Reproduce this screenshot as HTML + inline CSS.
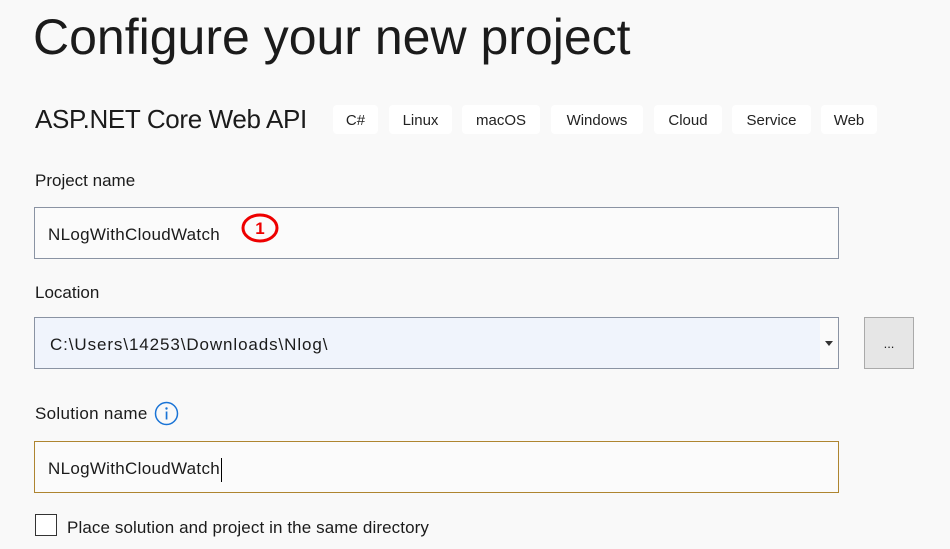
<!DOCTYPE html>
<html><head><meta charset="utf-8"><style>
body{margin:0;width:950px;height:549px;background:#f9f9f9;font-family:"Liberation Sans",sans-serif;color:#1b1b1b;position:relative;overflow:hidden}
.a{position:absolute;white-space:nowrap}
.tag{position:absolute;top:105px;height:29px;background:#fff;border-radius:4px;font-size:15px;line-height:31px;text-align:center;color:#222}
.lbl{font-size:17px}
.in{position:absolute;left:34px;width:803px;height:50px;border:1px solid #8a93a3;background:#fbfbfb;font-size:17px;line-height:53px;box-sizing:content-box}
</style></head><body>
<div class="a" style="left:33px;top:8px;font-size:50px;letter-spacing:0px">Configure your new project</div>
<div class="a" style="left:35px;top:104px;font-size:26px;letter-spacing:-0.35px">ASP.NET Core Web API</div>
<div class="tag" style="left:333px;width:45px">C#</div>
<div class="tag" style="left:389px;width:63px">Linux</div>
<div class="tag" style="left:462px;width:78px">macOS</div>
<div class="tag" style="left:551px;width:92px">Windows</div>
<div class="tag" style="left:654px;width:68px">Cloud</div>
<div class="tag" style="left:732px;width:79px">Service</div>
<div class="tag" style="left:821px;width:56px">Web</div>
<div class="a lbl" style="left:35px;top:171px">Project name</div>
<div class="in" style="top:207px"><span style="margin-left:13px;letter-spacing:0.3px">NLogWithCloudWatch</span></div>
<svg class="a" style="left:240px;top:212px" width="40" height="32"><ellipse cx="20" cy="16" rx="17" ry="13" fill="none" stroke="#e00" stroke-width="3"/><text x="20" y="22" text-anchor="middle" font-family="Liberation Sans" font-size="17" font-weight="bold" fill="#e00">1</text></svg>
<div class="a lbl" style="left:35px;top:283px">Location</div>
<div class="in" style="top:317px;background:#f0f4fc"><span style="margin-left:15px;letter-spacing:0.9px">C:\Users\14253\Downloads\Nlog\</span></div>
<div class="a" style="left:820px;top:318px;width:18px;height:50px;background:#fafafa"></div>
<div class="a" style="left:825px;top:341px;width:0;height:0;border-left:4px solid transparent;border-right:4px solid transparent;border-top:5px solid #333"></div>
<div class="a" style="left:864px;top:317px;width:48px;height:50px;background:#e6e6e6;border:1px solid #aaa;text-align:center;line-height:52px;font-size:13px">...</div>
<div class="a lbl" style="left:35px;top:404px;letter-spacing:0.3px">Solution name</div>
<svg class="a" style="left:154px;top:401px" width="25" height="25"><circle cx="12.5" cy="12.5" r="11" fill="none" stroke="#1a74d6" stroke-width="1.5"/><circle cx="12.5" cy="7.5" r="1.2" fill="#1a74d6"/><rect x="11.7" y="10.5" width="1.7" height="8" fill="#1a74d6"/></svg>
<div class="in" style="top:441px;border-color:#ae8530"><span style="margin-left:13px;letter-spacing:0.3px">NLogWithCloudWatch</span><span style="display:inline-block;width:1px;height:24px;background:#000;vertical-align:middle;margin-left:1px"></span></div>
<div class="a" style="left:35px;top:514px;width:20px;height:20px;border:1px solid #333;background:#fff"></div>
<div class="a lbl" style="left:67px;top:518px;letter-spacing:0.1px">Place solution and project in the same directory</div>
</body></html>
